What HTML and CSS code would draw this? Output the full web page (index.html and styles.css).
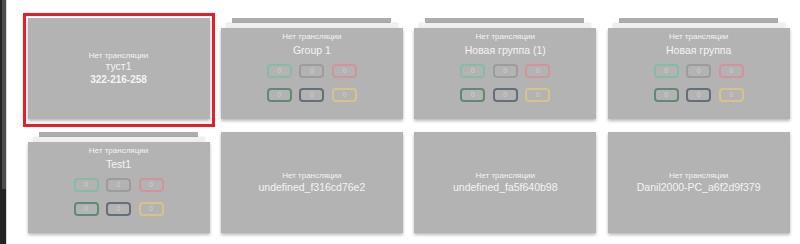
FILE: index.html
```html
<!DOCTYPE html>
<html lang="ru">
<head>
    <meta charset="UTF-8">
    <meta name="viewport" content="width=device-width, initial-scale=1.0">
    <title>Трансляции</title>
    <link rel="stylesheet" href="styles.css">
</head>
<body>
    <div class="app">
        <div class="side-edge"><div class="side-thumb"></div></div>

        <div class="grid">
            <!-- Selected device -->
            <div class="tile selected">
                <div class="card card-full">
                    <div class="status">Нет трансляции</div>
                    <div class="name name-tight">туст1</div>
                    <div class="code">322-216-258</div>
                </div>
            </div>

            <!-- Groups -->
            <div class="tile">
                <div class="stack-back"></div>
                <div class="stack-mid"></div>
                <div class="card card-group">
                    <div class="status">Нет трансляции</div>
                    <div class="name">Group 1</div>
                    <div class="counters">
                        <span class="counter c-green">0</span>
                        <span class="counter c-gray">0</span>
                        <span class="counter c-red">0</span>
                        <span class="counter c-dkgreen">0</span>
                        <span class="counter c-slate">0</span>
                        <span class="counter c-yellow">0</span>
                    </div>
                </div>
            </div>

            <div class="tile">
                <div class="stack-back"></div>
                <div class="stack-mid"></div>
                <div class="card card-group">
                    <div class="status">Нет трансляции</div>
                    <div class="name">Новая группа (1)</div>
                    <div class="counters">
                        <span class="counter c-green">0</span>
                        <span class="counter c-gray">0</span>
                        <span class="counter c-red">0</span>
                        <span class="counter c-dkgreen">0</span>
                        <span class="counter c-slate">0</span>
                        <span class="counter c-yellow">0</span>
                    </div>
                </div>
            </div>

            <div class="tile">
                <div class="stack-back"></div>
                <div class="stack-mid"></div>
                <div class="card card-group">
                    <div class="status">Нет трансляции</div>
                    <div class="name">Новая группа</div>
                    <div class="counters">
                        <span class="counter c-green">0</span>
                        <span class="counter c-gray">0</span>
                        <span class="counter c-red">0</span>
                        <span class="counter c-dkgreen">0</span>
                        <span class="counter c-slate">0</span>
                        <span class="counter c-yellow">0</span>
                    </div>
                </div>
            </div>

            <div class="tile">
                <div class="stack-back"></div>
                <div class="stack-mid"></div>
                <div class="card card-group">
                    <div class="status">Нет трансляции</div>
                    <div class="name">Test1</div>
                    <div class="counters">
                        <span class="counter c-green">0</span>
                        <span class="counter c-gray">0</span>
                        <span class="counter c-red">0</span>
                        <span class="counter c-dkgreen">0</span>
                        <span class="counter c-slate">0</span>
                        <span class="counter c-yellow">0</span>
                    </div>
                </div>
            </div>

            <!-- Devices -->
            <div class="tile">
                <div class="card card-full">
                    <div class="status">Нет трансляции</div>
                    <div class="name">undefined_f316cd76e2</div>
                </div>
            </div>

            <div class="tile">
                <div class="card card-full">
                    <div class="status">Нет трансляции</div>
                    <div class="name">undefined_fa5f640b98</div>
                </div>
            </div>

            <div class="tile">
                <div class="card card-full">
                    <div class="status">Нет трансляции</div>
                    <div class="name">Danil2000-PC_a6f2d9f379</div>
                </div>
            </div>
        </div>
    </div>
</body>
</html>
```

FILE: styles.css
```css
body {
    margin: 0;
    padding: 0;
    background-color: #fff;
    font-family: "Liberation Sans", Arial, sans-serif;
    overflow: hidden;
}
.app {
    display: flex;
    height: 244px;
}
.side-edge {
    width: 6px;
    flex: 0 0 6px;
    background-color: #232323;
    border-right: 1px solid #d6d6d6;
}
.side-thumb {
    width: 4px;
    height: 189px;
    margin-left: 2px;
    background-color: #4d4d4d;
}
.grid {
    display: grid;
    grid-template-columns: repeat(4, 182px);
    grid-auto-rows: 104px;
    column-gap: 11.4px;
    row-gap: 10.3px;
    padding: 18px 0 0 20.5px;
}
.tile {
    display: flex;
    flex-direction: column;
    align-items: stretch;
}
.tile.selected {
    outline: 3px solid #e61e2a;
    outline-offset: 2px;
}
.stack-back {
    height: 5px;
    margin: 0 12px 0 11px;
    background-color: #adadad;
}
.stack-mid {
    height: 5px;
    margin: 0 5px;
    background-color: #efefef;
    box-shadow: 0 0 2px rgba(0, 0, 0, 0.15);
}
.card {
    background-color: #b3b3b3;
    box-shadow: 0 2px 3px rgba(0, 0, 0, 0.28);
    display: flex;
    flex-direction: column;
    align-items: center;
    color: #f4f4f4;
    text-align: center;
}
.card-full {
    height: 101px;
    justify-content: center;
}
.card-group {
    height: 91px;
    padding-top: 4px;
    box-sizing: border-box;
}
.status {
    font-size: 8px;
    line-height: 10px;
}
.name {
    font-size: 10.5px;
    line-height: 13px;
}
.card-group .name {
    margin-top: 1.5px;
}
.name-tight {
    line-height: 10px;
}
.code {
    font-size: 10px;
    font-weight: bold;
    line-height: 12px;
    margin-top: 3px;
}
.counters {
    display: grid;
    grid-template-columns: repeat(3, 25px);
    column-gap: 7.5px;
    row-gap: 10px;
    margin-top: 7.5px;
}
.counter {
    box-sizing: border-box;
    height: 14px;
    border: 2px solid #999;
    border-radius: 4px;
    font-size: 7px;
    line-height: 10px;
    color: #d0d0d0;
}
.c-green { border-color: #80bfa3; }
.c-gray { border-color: #9c9c9c; }
.c-red { border-color: #d4939a; }
.c-dkgreen { border-color: #5f8a74; }
.c-slate { border-color: #666e78; }
.c-yellow { border-color: #d6c388; }
```
